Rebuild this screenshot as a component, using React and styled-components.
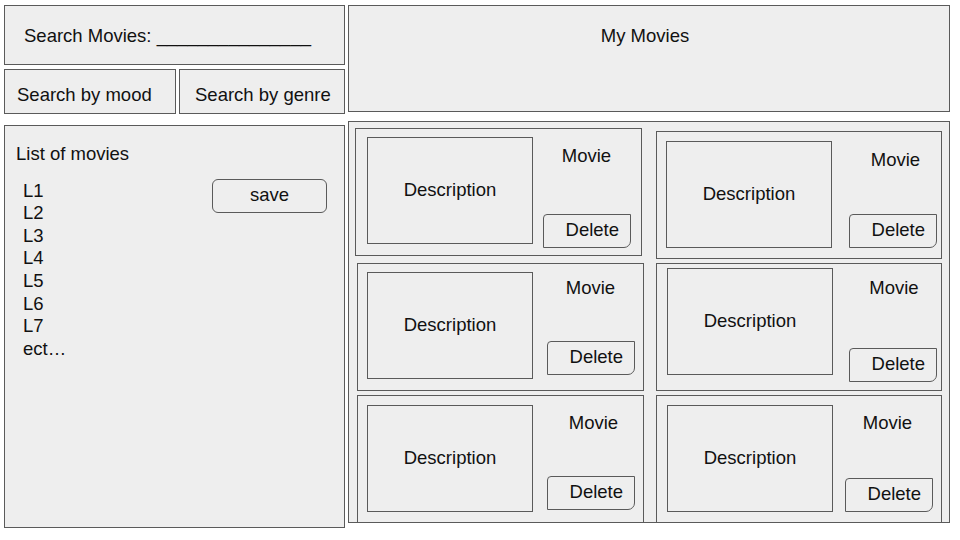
import React from "react";
import styled, { createGlobalStyle } from "styled-components";

const Global = createGlobalStyle`
  html, body { margin: 0; padding: 0; background: #ffffff; }
  body { font-family: "Liberation Sans", Arial, sans-serif; color: #111; }
  * { box-sizing: border-box; }
`;

const Page = styled.div`
  display: flex;
  gap: 3px;
  padding: 5px 0 0 4px;
  width: 960px;
  height: 540px;
  font-size: 18.5px;
  line-height: 22.6px;
`;

const Box = styled.div`
  background: #eeeeee;
  border: 1px solid #5a5a5a;
`;

const LeftColumn = styled.div`
  width: 341px;
  display: flex;
  flex-direction: column;
`;

const SearchBox = styled(Box)`
  height: 60px;
  display: flex;
  align-items: center;
  padding: 2px 0 0 19px;
  white-space: pre;
`;

const FilterRow = styled.div`
  display: flex;
  gap: 3px;
  margin-top: 4px;
  height: 45px;
`;

const FilterButton = styled(Box)`
  width: ${(p) => p.$width};
  flex: ${(p) => (p.$grow ? 1 : "none")};
  display: flex;
  align-items: center;
  padding: 7px 0 0 ${(p) => p.$pad}px;
  white-space: nowrap;
`;

const ListBox = styled(Box)`
  margin-top: 11px;
  height: 403px;
  padding: 17px 17px 0 11px;
`;

const ListTitle = styled.div``;

const ListBody = styled.div`
  display: flex;
  justify-content: space-between;
  align-items: flex-start;
  margin-top: 14px;
  padding-left: 7px;
`;

const List = styled.ul`
  list-style: none;
  margin: 0;
  padding: 0;
`;

const SaveButton = styled.button`
  width: 115px;
  height: 34px;
  margin-top: -1px;
  border: 1px solid #5a5a5a;
  border-radius: 6px;
  background: #eeeeee;
  font: inherit;
  color: inherit;
  padding: 0 0 1px;
`;

const RightColumn = styled.div`
  width: 602px;
  display: flex;
  flex-direction: column;
`;

const TitleBox = styled(Box)`
  height: 107px;
  text-align: center;
  padding: 19px 8px 0 0;
`;

const MoviesArea = styled(Box)`
  margin-top: 9px;
  height: 402px;
  overflow: hidden;
  padding: 6px 0 0 6px;
  display: grid;
  grid-template-columns: 287px 286px;
  grid-template-rows: 128px 128px 128px;
  column-gap: 14px;
  row-gap: 6px;
`;

const Card = styled(Box)`
  height: 128px;
  align-self: start;
  margin: ${(p) => `${p.$dy}px ${-p.$dx}px 0 ${p.$dx}px`};
  display: grid;
  grid-template-columns: 166px 1fr;
  column-gap: 9px;
  align-items: start;
  padding: 8px ${(p) => p.$padRight}px 0 ${(p) => p.$padLeft}px;
`;

const Description = styled.div`
  height: 107px;
  border: 1px solid #5a5a5a;
  display: flex;
  align-items: center;
  justify-content: center;
  margin-top: ${(p) => p.$top}px;
`;

const Actions = styled.div`
  height: ${(p) => p.$height}px;
  display: flex;
  flex-direction: column;
  align-items: center;
  justify-content: space-between;
`;

const MovieTitle = styled.div`
  padding-top: ${(p) => p.$top}px;
  padding-left: ${(p) => p.$left}px;
`;

const DeleteButton = styled.button`
  width: 88px;
  height: 34px;
  align-self: flex-end;
  border: 1px solid #5a5a5a;
  border-radius: 4px 0 7px 0;
  background: #eeeeee;
  font: inherit;
  color: inherit;
  text-align: right;
  padding: 0 11px 1px 0;
`;

const movies = [
  { dx: 0, dy: 0, padLeft: 11, padRight: 10, descTop: 0, actions: 111, titleTop: 8, titleLeft: 0 },
  { dx: 0, dy: 3, padLeft: 9, padRight: 4, descTop: 1, actions: 108, titleTop: 9, titleLeft: 13 },
  { dx: 2, dy: 1, padLeft: 9, padRight: 8, descTop: 0, actions: 103, titleTop: 5, titleLeft: 4 },
  { dx: 0, dy: 1, padLeft: 10, padRight: 4, descTop: -4, actions: 110, titleTop: 5, titleLeft: 9 },
  { dx: 2, dy: -1, padLeft: 9, padRight: 8, descTop: 1, actions: 106, titleTop: 8, titleLeft: 10 },
  { dx: 0, dy: -1, padLeft: 10, padRight: 8, descTop: 1, actions: 108, titleTop: 8, titleLeft: 0 },
];

export default function App() {
  return (
    <>
      <Global />
      <Page>
        <LeftColumn>
          <SearchBox>Search Movies: _______________</SearchBox>
          <FilterRow>
            <FilterButton $width="172px" $pad={12}>Search by mood</FilterButton>
            <FilterButton $grow $pad={15}>Search by genre</FilterButton>
          </FilterRow>
          <ListBox>
            <ListTitle>List of movies</ListTitle>
            <ListBody>
              <List>
                {["L1", "L2", "L3", "L4", "L5", "L6", "L7", "ect…"].map((l) => (
                  <li key={l}>{l}</li>
                ))}
              </List>
              <SaveButton>save</SaveButton>
            </ListBody>
          </ListBox>
        </LeftColumn>
        <RightColumn>
          <TitleBox>My Movies</TitleBox>
          <MoviesArea>
            {movies.map((m, i) => (
              <Card key={i} $dx={m.dx} $dy={m.dy} $padLeft={m.padLeft} $padRight={m.padRight}>
                <Description $top={m.descTop}>Description</Description>
                <Actions $height={m.actions}>
                  <MovieTitle $top={m.titleTop} $left={m.titleLeft}>Movie</MovieTitle>
                  <DeleteButton>Delete</DeleteButton>
                </Actions>
              </Card>
            ))}
          </MoviesArea>
        </RightColumn>
      </Page>
    </>
  );
}
